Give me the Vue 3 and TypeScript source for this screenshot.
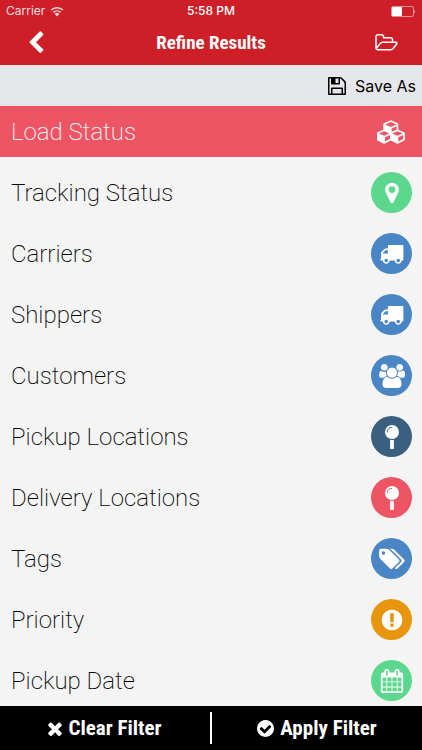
<script setup lang="ts">
import { ref } from 'vue'

interface FilterItem {
  label: string
  icon: string
  tone: string
}

const icons: Record<string, { box: string; path: string }> = {
  cubes: {
    box: '30 0 2304 1792',
    path: 'M640 1632l384-192v-314l-384 164v342zm-64-454l404-173-404-173-404 173zm1088 454l384-192v-314l-384 164v342zm-64-454l404-173-404-173-404 173zm-448-293l384-165v-266l-384 164v267zm-64-379l441-189-441-189-441 189zm1088 518v416q0 36-19 67t-52 47l-448 224q-25 14-57 14t-57-14l-448-224q-4-2-7-4-2 2-7 4l-448 224q-25 14-57 14t-57-14l-448-224q-33-16-52-47t-19-67v-416q0-38 21.5-70t56.5-48l434-186v-400q0-38 21.5-70t56.5-48l448-192q23-10 50-10t50 10l448 192q35 16 56.5 48t21.5 70v400l434 186q36 16 57 48t21 70z',
  },
  marker: {
    box: '0 0 1792 1792',
    path: 'M1152 640q0-106-75-181t-181-75-181 75-75 181 75 181 181 75 181-75 75-181zm256 0q0 109-33 179l-364 774q-16 33-47.5 52t-67.5 19-67.5-19-46.5-52l-365-774q-33-70-33-179 0-212 150-362t362-150 362 150 150 362z',
  },
  truck: {
    box: '48 32 1792 1792',
    path: 'M640 1408q0-52-38-90t-90-38-90 38-38 90 38 90 90 38 90-38 38-90zm-384-512h384v-256h-158q-13 0-22 9l-195 195q-9 9-9 22v30zm1280 512q0-52-38-90t-90-38-90 38-38 90 38 90 90 38 90-38 38-90zm256-1088v1024q0 15-4 26.5t-13.5 18.5-16.5 11.5-23.5 6-22.5 2-25.5 0-22.5-.5q0 106-75 181t-181 75-181-75-75-181h-384q0 106-75 181t-181 75-181-75-75-181h-64q-3 0-22.5.5t-25.5 0-22.5-2-23.5-6-16.5-11.5-13.5-18.5-4-26.5q0-26 19-45t45-19v-320q0-8-.5-35t0-38 2.5-34.5 6.5-37 14-30.5 22.5-30l198-198q19-19 50.5-32t58.5-13h160v-192q0-26 19-45t45-19h1024q26 0 45 19t19 45z',
  },
  users: {
    box: '64 0 1920 1792',
    path: 'M657 896q-162 5-265 128h-134q-82 0-138-40.5t-56-118.5q0-353 124-353 6 0 43.5 21t97.5 42.5 119 21.5q67 0 133-23-5 37-5 66 0 159 93 290zm1071 637q0 120-73 189.5t-194 69.5h-874q-121 0-194-69.5t-73-189.5q0-53 3.5-103.5t14-109 26.5-108.5 43-97.5 62-81 85.5-53.5 111.5-20q10 0 43 21.5t73 48 107 48 135 21.5 135-21.5 107-48 73-48 43-21.5q61 0 111.5 20t85.5 53.5 62 81 43 97.5 26.5 108.5 14 109 3.5 103.5zm-1024-1277q0 106-75 181t-181 75-181-75-75-181 75-181 181-75 181 75 75 181zm704 384q0 159-112.5 271.5t-271.5 112.5-271.5-112.5-112.5-271.5 112.5-271.5 271.5-112.5 271.5 112.5 112.5 271.5zm576 225q0 78-56 118.5t-138 40.5h-134q-103-123-265-128 93-131 93-290 0-29-5-66 66 23 133 23 59 0 119-21.5t97.5-42.5 43.5-21q124 0 124 353zm-128-609q0 106-75 181t-181 75-181-75-75-181 75-181 181-75 181 75 75 181z',
  },
  pin: {
    box: '0 0 24 24',
    path: 'M12 0a7 7 0 1 0 0 14a7 7 0 1 0 0-14zM11.6 2.1a.45.45 0 0 1 0 .9a4 4 0 0 0-4 4a.45.45 0 0 1-.9 0a4.9 4.9 0 0 1 4.9-4.9zM10.1 14.7q1.9.5 3.8 0V23.4q0 .6-.6.6h-2.600q-.6 0-.6-.6z',
  },
  tags: {
    box: '0 0 1920 1792',
    path: 'M448 448q0-53-37.5-90.5t-90.5-37.5-90.5 37.5-37.5 90.5 37.5 90.5 90.5 37.5 90.5-37.5 37.5-90.5zm1067 576q0 53-37 90l-491 492q-39 37-91 37-53 0-90-37l-715-716q-38-37-64.5-101t-26.5-117v-416q0-52 38-90t90-38h416q53 0 117 26.5t102 64.5l715 714q37 39 37 91zm384 0q0 53-37 90l-491 492q-39 37-91 37-36 0-59-14t-53-45l470-470q37-37 37-90 0-52-37-91l-715-714q-38-38-102-64.5t-117-26.5h224q53 0 117 26.5t102 64.5l715 714q37 39 37 91z',
  },
  alert: {
    box: '0 0 1792 1792',
    path: 'M896 128q209 0 385.5 103t279.5 279.5 103 385.5-103 385.5-279.5 279.5-385.5 103-385.5-103-279.5-279.5-103-385.5 103-385.5 279.5-279.5 385.5-103zm128 1247v-190q0-14-9-23.5t-22-9.5h-192q-13 0-23 10t-10 23v190q0 13 10 23t23 10h192q13 0 22-9.5t9-23.5zm-2-344l18-621q0-12-10-18-10-8-24-8h-220q-14 0-24 8-10 6-10 18l17 621q0 10 10 17.5t24 7.5h185q14 0 23.5-7.5t10.5-17.5z',
  },
  calendar: {
    box: '0 0 1792 1792',
    path: 'M192 1664h288v-288h-288v288zm352 0h320v-288h-320v288zm-352-352h288v-320h-288v320zm352 0h320v-320h-320v320zm-352-384h288v-288h-288v288zm736 736h320v-288h-320v288zm-384-736h320v-288h-320v288zm768 736h288v-288h-288v288zm-384-352h320v-320h-320v320zm-352-864v-288q0-13-9.5-22.5t-22.5-9.5h-64q-13 0-22.5 9.5t-9.5 22.5v288q0 13 9.5 22.5t22.5 9.5h64q13 0 22.5-9.5t9.5-22.5zm736 864h288v-320h-288v320zm-384-384h320v-288h-320v288zm384 0h288v-288h-288v288zm32-480v-288q0-13-9.5-22.5t-22.5-9.5h-64q-13 0-22.5 9.5t-9.5 22.5v288q0 13 9.5 22.5t22.5 9.5h64q13 0 22.5-9.5t9.5-22.5zm384-64v1280q0 52-38 90t-90 38h-1408q-52 0-90-38t-38-90v-1280q0-52 38-90t90-38h128v-96q0-66 47-113t113-47h64q66 0 113 47t47 113v96h384v-96q0-66 47-113t113-47h64q66 0 113 47t47 113v96h128q52 0 90 38t38 90z',
  },
}

const filters: FilterItem[] = [
  { label: 'Load Status', icon: 'cubes', tone: 'plain' },
  { label: 'Tracking Status', icon: 'marker', tone: 'green' },
  { label: 'Carriers', icon: 'truck', tone: 'blue' },
  { label: 'Shippers', icon: 'truck', tone: 'blue' },
  { label: 'Customers', icon: 'users', tone: 'blue' },
  { label: 'Pickup Locations', icon: 'pin', tone: 'navy' },
  { label: 'Delivery Locations', icon: 'pin', tone: 'rose' },
  { label: 'Tags', icon: 'tags', tone: 'blue' },
  { label: 'Priority', icon: 'alert', tone: 'orange' },
  { label: 'Pickup Date', icon: 'calendar', tone: 'green' },
]

const selected = ref('Load Status')
</script>

<template>
  <div class="screen">
    <header class="top">
      <div class="status">
        <span class="carrier">
          Carrier
          <svg class="wifi" viewBox="0 0 24 18" aria-hidden="true">
            <path d="M2 6.500a14.500 14.500 0 0 1 20 0M5.600 10.400a9.300 9.300 0 0 1 12.800 0" fill="none" stroke="currentColor" stroke-width="2.400" />
            <path d="M8 13a6 6 0 0 1 8 0l-4 4.500z" fill="currentColor" />
          </svg>
        </span>
        <span class="time">5:58 PM</span>
        <svg class="battery" viewBox="0 0 25 11" aria-hidden="true">
          <rect x=".5" y=".5" width="22" height="10" rx="1.500" fill="none" stroke="currentColor" stroke-opacity=".5" />
          <path d="M1 1h10v9H1z" fill="currentColor" />
          <path d="M23.500 3.700q1.500 1.800 0 3.600z" fill="currentColor" />
        </svg>
      </div>
      <nav class="nav">
        <button type="button" class="icon-button" aria-label="Back">
          <svg class="back" viewBox="0 0 1792 1792" aria-hidden="true">
            <path fill="currentColor" d="M1427 301l-531 531 531 531q19 19 19 45t-19 45l-166 166q-19 19-45 19t-45-19l-742-742q-19-19-19-45t19-45l742-742q19-19 45-19t45 19l166 166q19 19 19 45t-19 45z" />
          </svg>
        </button>
        <h1 class="title">Refine Results</h1>
        <button type="button" class="icon-button" aria-label="Saved filters">
          <svg class="folder" viewBox="64 128 1920 1536" aria-hidden="true">
            <path fill="currentColor" d="M1845 931q0-35-53-35h-1088q-40 0-85.5 21.5t-71.5 52.5l-294 363q-18 24-18 40 0 35 53 35h1088q40 0 86-22t71-53l294-363q18-22 18-39zm-1141-163h768v-160q0-40-28-68t-68-28h-576q-40 0-68-28t-28-68v-64q0-40-28-68t-68-28h-320q-40 0-68 28t-28 68v853l256-315q44-53 116-87.5t140-34.5zm1269 163q0 62-46 120l-295 363q-43 53-116 87.5t-140 34.5h-1088q-92 0-158-66t-66-158v-960q0-92 66-158t158-66h320q92 0 158 66t66 158v32h544q92 0 158 66t66 158v160h192q54 0 99 24.5t67 70.5q15 32 15 68z" />
          </svg>
        </button>
      </nav>
    </header>

    <div class="toolbar">
      <button type="button" class="save">
        <svg class="floppy" viewBox="128 128 1536 1536" aria-hidden="true">
          <path fill="currentColor" d="M512 1536h768v-384h-768v384zm896 0h128v-896q0-14-10-38.5t-20-34.5l-281-281q-10-10-34-20t-39-10v416q0 40-28 68t-68 28h-576q-40 0-68-28t-28-68v-416h-128v1280h128v-416q0-40 28-68t68-28h832q40 0 68 28t28 68v416zm-384-928v-320q0-13-9.5-22.5t-22.5-9.5h-192q-13 0-22.5 9.5t-9.5 22.5v320q0 13 9.5 22.5t22.5 9.5h192q13 0 22.5-9.5t9.5-22.5zm640 32v928q0 40-28 68t-68 28h-1344q-40 0-68-28t-28-68v-1344q0-40 28-68t68-28h928q40 0 88 20t76 48l280 280q28 28 48 76t20 88z" />
        </svg>
        Save As
      </button>
    </div>

    <main class="list">
      <button
        v-for="item in filters"
        :key="item.label"
        type="button"
        class="row"
        :class="{ active: item.label === selected }"
        @click="selected = item.label"
      >
        <span>{{ item.label }}</span>
        <span class="badge" :class="item.tone">
          <svg :class="['glyph', item.icon]" :viewBox="icons[item.icon].box" aria-hidden="true">
            <path fill="currentColor" fill-rule="evenodd" :d="icons[item.icon].path" />
          </svg>
        </span>
      </button>
    </main>

    <footer class="actions">
      <button type="button" class="action">
        <svg class="cross" viewBox="302 238 1188 1316" aria-hidden="true">
          <path fill="currentColor" d="M1490 1322q0 40-28 68l-136 136q-28 28-68 28t-68-28l-294-294-294 294q-28 28-68 28t-68-28l-136-136q-28-28-28-68t28-68l294-294-294-294q-28-28-28-68t28-68l136-136q28-28 68-28t68 28l294 294 294-294q28-28 68-28t68 28l136 136q28 28 28 68t-28 68l-294 294 294 294q28 28 28 68z" />
        </svg>
        Clear Filter
      </button>
      <span class="divider"></span>
      <button type="button" class="action">
        <svg class="check" viewBox="128 128 1536 1536" aria-hidden="true">
          <path fill="currentColor" d="M1412 734q0-28-18-46l-91-90q-19-19-45-19t-45 19l-408 407-226-226q-19-19-45-19t-45 19l-91 90q-18 18-18 46 0 27 18 45l362 362q19 19 45 19 27 0 46-19l543-543q18-18 18-45zm252 162q0 209-103 385.5t-279.5 279.5-385.5 103-385.5-103-279.5-279.5-103-385.5 103-385.5 279.5-279.5 385.5-103 385.5 103 279.5 279.5 103 385.5z" />
        </svg>
        Apply Filter
      </button>
    </footer>
  </div>
</template>

<style>
body {
  margin: 0;
}
</style>

<style scoped>
.screen {
  display: flex;
  flex-direction: column;
  height: 100vh;
  overflow: hidden;
  background: #f4f4f4;
  font-family: Roboto, sans-serif;
  color: #000;
}
button {
  margin: 0;
  padding: 0;
  border: 0;
  background: none;
  color: inherit;
  font: inherit;
  cursor: pointer;
}
svg {
  display: block;
  flex: none;
}
.top {
  flex: none;
  background: #ce1f28;
  color: #fff;
}
.status {
  display: grid;
  grid-template-columns: 1fr auto 1fr;
  align-items: center;
  height: 22px;
  padding: 0 6px;
  font: 12px/22px Inter, sans-serif;
}
.carrier {
  display: flex;
  align-items: center;
  gap: 5px;
  color: #f9dfe0;
}
.wifi {
  width: 14px;
  height: 11px;
}
.time {
  font-weight: 500;
}
.battery {
  width: 25px;
  height: 11px;
  justify-self: end;
}
.nav {
  display: flex;
  align-items: center;
  justify-content: space-between;
  height: 41px;
  padding: 0 20px 2px;
}
.icon-button {
  display: flex;
  align-items: center;
  justify-content: center;
  width: 32px;
  height: 40px;
}
.back {
  width: 24px;
  height: 24px;
}
.folder {
  width: 23px;
  height: 18px;
}
.title {
  margin: 0;
  font: bold 19px/24px "Roboto Condensed", "Liberation Sans Narrow", Roboto, sans-serif;
}
.toolbar {
  flex: none;
  display: flex;
  justify-content: flex-end;
  height: 41px;
  padding-right: 6px;
  background: #e6e7eb;
}
.save {
  display: flex;
  align-items: center;
  gap: 9px;
  font: 16px/24px Inter, sans-serif;
}
.floppy {
  width: 18px;
  height: 18px;
}
.list {
  flex: 1;
  min-height: 0;
  display: flex;
  flex-direction: column;
  gap: 10px;
  overflow: hidden;
}
.row {
  flex: none;
  display: flex;
  align-items: center;
  justify-content: space-between;
  height: 51px;
  padding: 0 10px 0 11px;
  font-size: 24px;
  line-height: 32px;
  font-weight: 200;
  text-align: left;
}
.row.active {
  background: #ed5565;
  color: #fff;
}
.badge {
  display: flex;
  align-items: center;
  justify-content: center;
  width: 41px;
  height: 41px;
  border-radius: 50%;
  color: #fff;
}
.green {
  background: #5bd88d;
}
.blue {
  background: #4a86c5;
}
.navy {
  background: #3b607f;
}
.rose {
  background: #ed5565;
}
.orange {
  background: #e8960f;
}
.glyph {
  width: 24px;
  height: 24px;
}
.cubes {
  width: 30px;
}
.users,
.tags {
  width: 26px;
}
.actions {
  flex: none;
  display: flex;
  align-items: center;
  height: 44px;
  background: #000;
  color: #fff;
}
.action {
  flex: 1;
  display: flex;
  align-items: center;
  justify-content: center;
  gap: 6px;
  height: 44px;
  font: bold 21px/28px "Roboto Condensed", "Liberation Sans Narrow", Roboto, sans-serif;
}
.cross {
  width: 14px;
  height: 15px;
}
.check {
  width: 17px;
  height: 17px;
}
.divider {
  width: 2px;
  height: 32px;
  background: #fff;
}
</style>
